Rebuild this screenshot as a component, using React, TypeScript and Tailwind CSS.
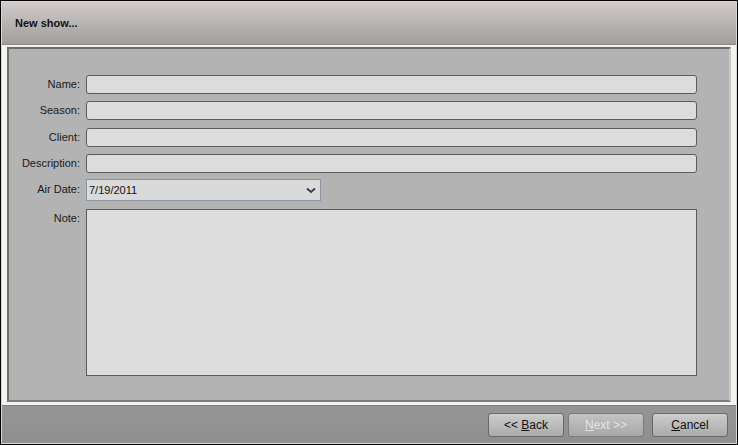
import React from "react";

const font = { fontFamily: '"Liberation Sans", Arial, sans-serif' };

function Field({ label, className = "h-[19px]", mt = "" }: { label: string; className?: string; mt?: string }) {
  return (
    <div className={`flex items-start gap-[6px] ${mt}`}>
      <div className="w-[65px] text-right text-[11px] text-[#1a1a1a] leading-[19px]">{label}</div>
      <div className={`w-[611px] rounded-[3px] border border-[#5c5c5c] bg-[#dcdcdc] ${className}`} />
    </div>
  );
}

export default function App() {
  return (
    <div style={font} className="w-[738px] h-[445px] border border-black bg-[#8f8f8f] flex flex-col">
      <div className="flex-1 flex flex-col border border-[#d8d8d8]">
        <div className="h-[43px] shrink-0 bg-gradient-to-b from-[#d2caca] to-[#a09e9e] flex items-center pl-[13px] border-b border-[#8c8a8a]">
          <span className="text-[11px] font-bold text-[#111]">New show...</span>
        </div>
        <div className="h-[361px] shrink-0 bg-[#f4f4ee] pt-[2px] px-[5px] pb-[3px] border-b border-[#7a7a7a]">
          <div className="h-full border-[2px] border-[#6e6e6e] border-r-[#c9c9c9] border-b-[#7c7c7c] bg-[#b3b3b3] pt-[26px] pl-[6px] flex flex-col">
            <Field label="Name:" />
            <Field label="Season:" mt="mt-[7px]" />
            <Field label="Client:" mt="mt-[8px]" />
            <Field label="Description:" mt="mt-[7px]" />
            <div className="flex items-start gap-[6px] mt-[6px]">
              <div className="w-[65px] text-right text-[11px] text-[#1a1a1a] leading-[21px]">Air Date:</div>
              <div className="w-[235px] h-[22px] border border-[#8a95a4] bg-[#dadada] flex items-center justify-between pl-[2px] pr-[4px]">
                <span className="text-[11px] text-[#111]">7/19/2011</span>
                <svg width="10" height="7" viewBox="0 0 10 7">
                  <path d="M1 1.5 L5 5 L9 1.5" stroke="#3a3f55" strokeWidth="2" fill="none" />
                </svg>
              </div>
            </div>
            <Field label="Note:" className="h-[167px] rounded-none" mt="mt-[8px]" />
          </div>
        </div>
        <div className="flex-1 bg-gradient-to-b from-[#959595] to-[#8f8f8f] flex items-center justify-end gap-[4px] pr-[8px] pt-[1px]">
          <button className="w-[76px] h-[24px] rounded-[3px] border border-[#686868] bg-gradient-to-b from-[#cdcdcd] to-[#aaaaaa] text-[12px] text-[#111]">
            &lt;&lt; <span className="underline">B</span>ack
          </button>
          <button className="w-[76px] h-[24px] rounded-[3px] border border-[#7a7a7a] bg-gradient-to-b from-[#c3c3c3] to-[#a8a8a8] text-[12px] text-[#e4e4e4]">
            <span className="underline">N</span>ext &gt;&gt;
          </button>
          <button className="ml-[4px] w-[76px] h-[24px] rounded-[3px] border border-[#686868] bg-gradient-to-b from-[#cdcdcd] to-[#aaaaaa] text-[12px] text-[#111]">
            <span className="underline">C</span>ancel
          </button>
        </div>
      </div>
    </div>
  );
}
